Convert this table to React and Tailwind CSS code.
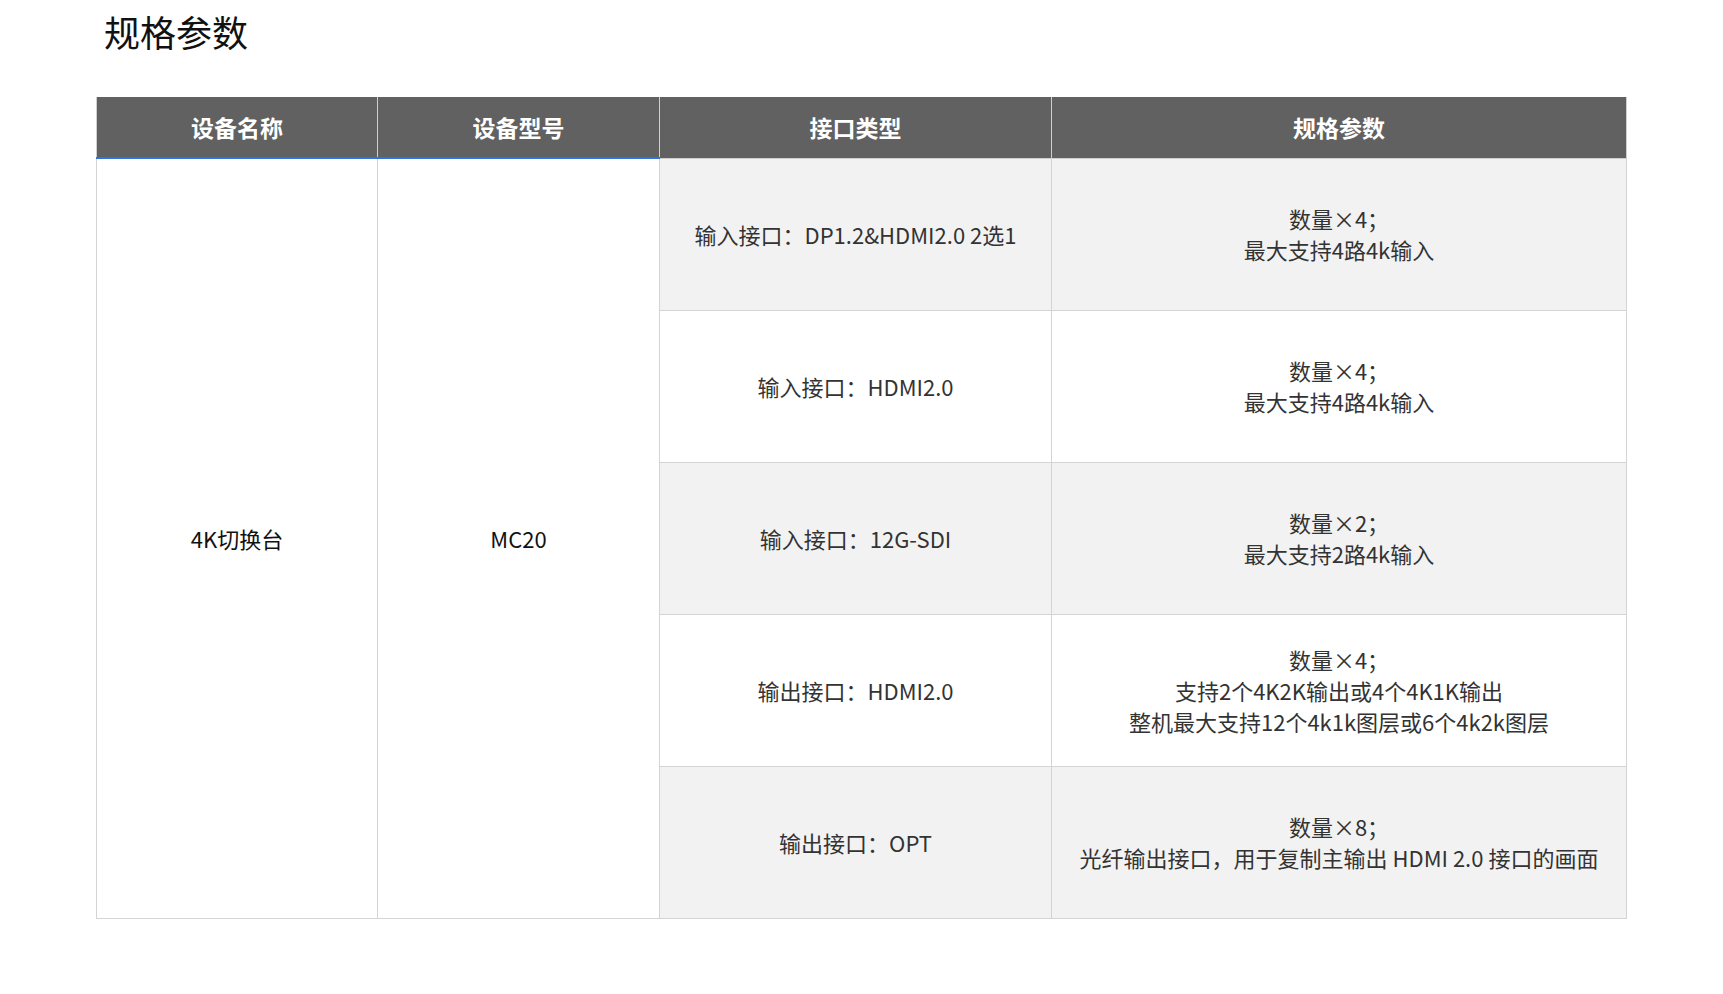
const rows = [
  { port: '输入接口：DP1.2&HDMI2.0 2选1', spec: ['数量×4；', '最大支持4路4k输入'], shade: true },
  { port: '输入接口：HDMI2.0', spec: ['数量×4；', '最大支持4路4k输入'], shade: false },
  { port: '输入接口：12G-SDI', spec: ['数量×2；', '最大支持2路4k输入'], shade: true },
  {
    port: '输出接口：HDMI2.0',
    spec: ['数量×4；', '支持2个4K2K输出或4个4K1K输出', '整机最大支持12个4k1k图层或6个4k2k图层'],
    shade: false,
  },
  { port: '输出接口：OPT', spec: ['数量×8；', '光纤输出接口，用于复制主输出 HDMI 2.0 接口的画面'], shade: true },
];

export default function App() {
  return (
    <main className="min-h-screen bg-white px-[96px] pt-[4px] font-['Noto_Sans_CJK_SC','Noto_Sans',sans-serif]">
      <h1 className="ml-[8px] text-[36px] leading-[54px] font-normal text-[#111]">规格参数</h1>

      <table className="mt-[39px] w-[1530px] table-fixed border-collapse text-center">
        <colgroup>
          <col className="w-[281px]" />
          <col className="w-[282px]" />
          <col className="w-[392px]" />
          <col className="w-[575px]" />
        </colgroup>
        <thead>
          <tr className="h-[61px] bg-[#616161] text-[23px] font-bold text-white">
            <th className="border-x border-b-2 border-x-[#cfcfcf] border-b-[#2f72e6]">设备名称</th>
            <th className="border-x border-b-2 border-x-[#cfcfcf] border-b-[#2f72e6]">设备型号</th>
            <th className="border-x border-b border-[#cfcfcf]">接口类型</th>
            <th className="border-x border-b border-[#cfcfcf]">规格参数</th>
          </tr>
        </thead>
        <tbody className="text-[22px] leading-[31px] text-[#333]">
          {rows.map((r, i) => (
            <tr key={i} className="h-[152px]">
              {i === 0 && (
                <>
                  <td rowSpan={5} className="border border-[#d4d4d4] bg-white text-[#111]">4K切换台</td>
                  <td rowSpan={5} className="border border-[#d4d4d4] bg-white text-[#111]">MC20</td>
                </>
              )}
              <td className={`border border-[#d4d4d4] ${r.shade ? 'bg-[#f2f2f2]' : 'bg-white'}`}>{r.port}</td>
              <td className={`border border-[#d4d4d4] ${r.shade ? 'bg-[#f2f2f2]' : 'bg-white'}`}>
                {r.spec.map((line) => (
                  <div key={line}>{line}</div>
                ))}
              </td>
            </tr>
          ))}
        </tbody>
      </table>
    </main>
  );
}
